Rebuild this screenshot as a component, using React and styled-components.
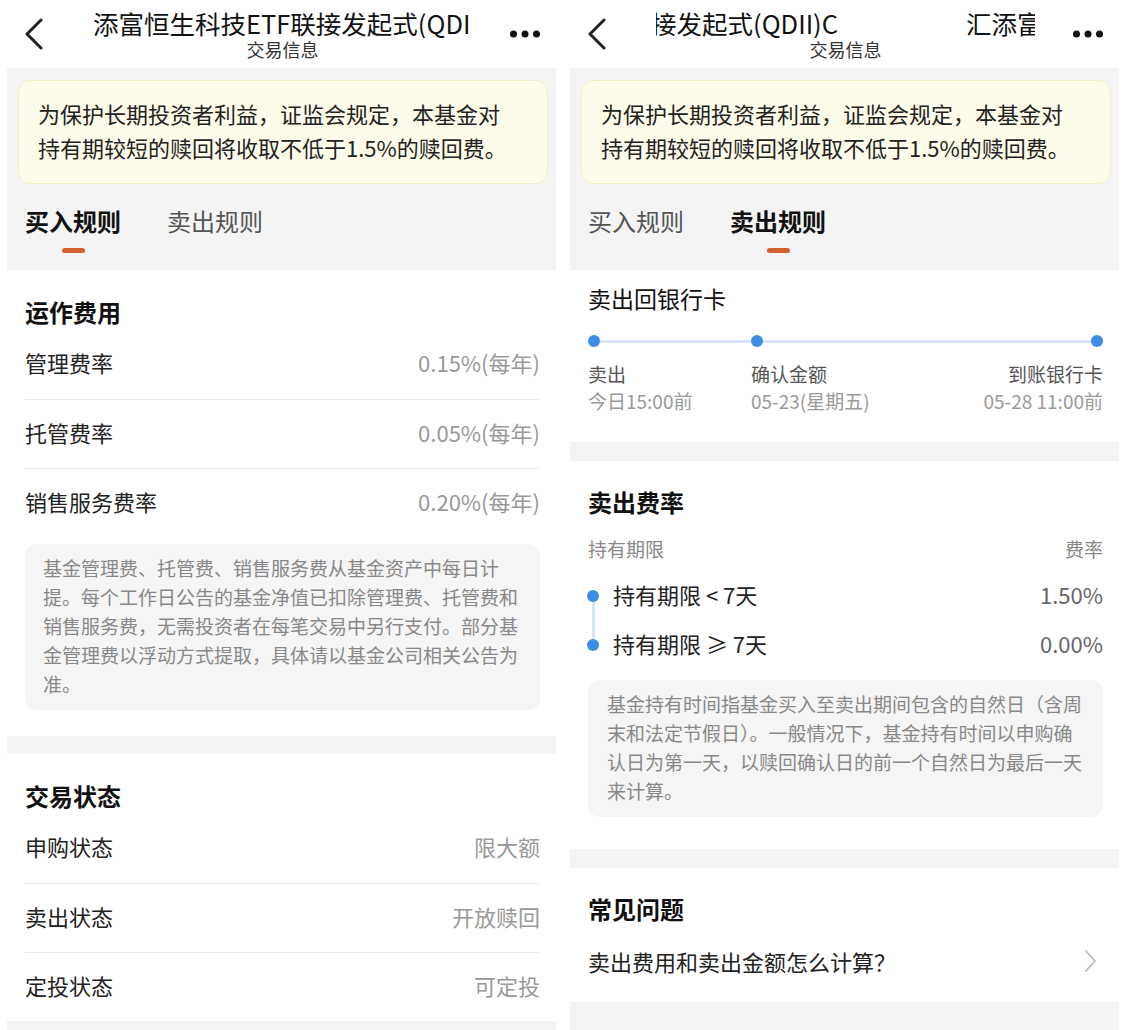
import React from 'react'
import styled, { createGlobalStyle } from 'styled-components'

const FUND_NAME = '汇添富恒生科技ETF联接发起式(QDII)C'

const GlobalStyle = createGlobalStyle`
  html, body {
    margin: 0;
    padding: 0;
    background: #fff;
  }
  body {
    font-family: "Noto Sans CJK SC", "Noto Sans", sans-serif;
    color: #222;
  }
  * {
    box-sizing: border-box;
  }
`

const Page = styled.div`
  display: flex;
  gap: 14px;
  width: 1130px;
  height: 1030px;
  padding-left: 7px;
  overflow: hidden;
  background: #fff;
`

const Screen = styled.div`
  width: 549px;
  flex-shrink: 0;
  display: flex;
  flex-direction: column;
  background: #f4f4f4;
`

/* header */

const Header = styled.header`
  height: 68px;
  flex-shrink: 0;
  background: #fff;
  display: grid;
  grid-template-columns: 86px 379px 1fr;
  align-items: center;
`

const Back = styled.div`
  display: flex;
  align-items: center;
  padding-left: 17px;
`

const TitleBlock = styled.div`
  align-self: start;
  padding-top: 8px;
  display: flex;
  flex-direction: column;
  align-items: center;
  min-width: 0;
`

const TitleClip = styled.div`
  width: 100%;
  height: 30px;
  overflow: hidden;
`

const TitleTrack = styled.div`
  display: flex;
  gap: 128px;
  white-space: nowrap;
  font-size: 25.5px;
  line-height: 30px;
  color: #111;
`

const TitleCopy = styled.span`
  flex-shrink: 0;
  margin-left: ${(p) => (p.$hideFirst ? '-1em' : '0')};
`

const TitleLead = styled.span`
  width: ${(p) => p.$end}px;
  min-width: 0;
  flex-shrink: 0;
  display: flex;
  justify-content: flex-end;
`

const Subtitle = styled.div`
  margin-top: 0;
  font-size: 18px;
  line-height: 22px;
  color: #333;
`

const Menu = styled.div`
  display: flex;
  justify-content: flex-end;
  padding-right: 16px;
`

/* notice + tabs */

const TopArea = styled.div`
  padding: 12px 8px 0 11px;
`

const Notice = styled.div`
  background: #fdfbe9;
  border: 1px solid #f3ecc9;
  border-radius: 12px;
  padding: 15px 30px 19px 19px;
  font-size: 22px;
  line-height: 34px;
  color: #222;
`

const Tabs = styled.div`
  display: flex;
  gap: 46px;
  margin-top: 21px;
  padding: 0 0 17px 7px;
`

const Tab = styled.div`
  display: flex;
  flex-direction: column;
  align-items: center;
  font-size: 24px;
  line-height: 32px;
  font-weight: ${(p) => (p.$active ? 700 : 400)};
  color: ${(p) => (p.$active ? '#111' : '#555')};
`

const TabBar = styled.span`
  width: 23px;
  height: 5px;
  margin-top: 11px;
  border-radius: 3px;
  background: ${(p) => (p.$active ? '#d4602f' : 'transparent')};
`

/* sections */

const Section = styled.section`
  background: #fff;
  margin-top: ${(p) => p.$gap || 0}px;
  padding: ${(p) => p.$top ?? 26}px 16px ${(p) => p.$bottom ?? 0}px 18px;
`

const SectionTitle = styled.h2`
  margin: 0 0 2px;
  font-size: ${(p) => (p.$plain ? 23 : 24)}px;
  line-height: 32px;
  font-weight: ${(p) => (p.$plain ? 400 : 700)};
  color: #111;
`

const InfoRow = styled.div`
  height: 69px;
  padding-bottom: 5px;
  display: flex;
  align-items: center;
  justify-content: space-between;
  & + & {
    border-top: 1px solid #ececec;
  }
`

const Label = styled.span`
  font-size: 22px;
  color: #222;
`

const Value = styled.span`
  font-size: 22px;
  color: ${(p) => p.$color || '#999'};
`

const NoteBox = styled.div`
  margin-top: ${(p) => p.$gap}px;
  background: #f5f5f5;
  border-radius: 12px;
  padding: 9px 18px 12px ${(p) => p.$left || 18}px;
  font-size: 19px;
  line-height: 29px;
  color: #888;
`

/* sell-side timeline */

const Timeline = styled.div`
  display: grid;
  grid-template-columns: 163px 1fr auto;
  margin-top: 21px;
  background: linear-gradient(#d6e6f6, #d6e6f6) no-repeat;
  background-size: calc(100% - 12px) 3px;
  background-position: 6px 4.5px;
`

const Step = styled.div`
  display: flex;
  flex-direction: column;
  align-items: ${(p) => (p.$end ? 'flex-end' : 'flex-start')};
`

const Dot = styled.span`
  width: 12px;
  height: 12px;
  border-radius: 50%;
  background: #3f8be8;
  flex-shrink: 0;
`

const StepLabel = styled.span`
  margin-top: 14px;
  font-size: 19px;
  line-height: 26px;
  color: #555;
`

const StepTime = styled.span`
  margin-top: 1px;
  font-size: 19px;
  line-height: 26px;
  color: #999;
`

/* fee table */

const FeeHead = styled.div`
  margin-top: 18px;
  display: flex;
  justify-content: space-between;
  font-size: 19px;
  line-height: 26px;
  color: #888;
`

const FeeRows = styled.div`
  margin-top: 10px;
  background: linear-gradient(#d6e6f6, #d6e6f6) no-repeat;
  background-size: 3px 48px;
  background-position: 3.5px 23px;
`

const FeeRow = styled.div`
  height: 49px;
  display: flex;
  align-items: center;
  & > ${Dot} {
    margin-left: -1px;
    margin-top: -2px;
  }
`

const FeeText = styled.span`
  display: flex;
  flex: 1;
  justify-content: space-between;
  padding-bottom: 6px;
  margin-left: 14px;
`

const FaqRow = styled.div`
  height: 72px;
  padding-bottom: 5px;
  display: flex;
  align-items: center;
  justify-content: space-between;
  padding-right: 6px;
`

const BackIcon = () => (
  <svg width='20' height='32' viewBox='0 0 20 32'>
    <polyline points='17,2 3,16 17,30' fill='none' stroke='#222' strokeWidth='3' strokeLinecap='round' strokeLinejoin='round' />
  </svg>
)

const MoreIcon = () => (
  <svg width='30' height='8' viewBox='0 0 30 8'>
    <circle cx='3.5' cy='4' r='3.5' fill='#111' />
    <circle cx='15' cy='4' r='3.5' fill='#111' />
    <circle cx='26.5' cy='4' r='3.5' fill='#111' />
  </svg>
)

const ArrowIcon = () => (
  <svg width='13' height='24' viewBox='0 0 13 24'>
    <polyline points='2,2 11,12 2,22' fill='none' stroke='#bbb' strokeWidth='1.8' strokeLinecap='round' strokeLinejoin='round' />
  </svg>
)

const TopBar = ({ scrolled }) => (
  <Header>
    <Back><BackIcon /></Back>
    <TitleBlock>
      <TitleClip>
        <TitleTrack>
          {scrolled ? (
            <>
              <TitleLead $end={182}><TitleCopy>{FUND_NAME}</TitleCopy></TitleLead>
              <TitleCopy>{FUND_NAME}</TitleCopy>
            </>
          ) : (
            <>
              <TitleCopy $hideFirst>{FUND_NAME}</TitleCopy>
              <TitleCopy>{FUND_NAME}</TitleCopy>
            </>
          )}
        </TitleTrack>
      </TitleClip>
      <Subtitle>交易信息</Subtitle>
    </TitleBlock>
    <Menu><MoreIcon /></Menu>
  </Header>
)

const Intro = ({ active }) => (
  <TopArea>
    <Notice>为保护长期投资者利益，证监会规定，本基金对持有期较短的赎回将收取不低于1.5%的赎回费。</Notice>
    <Tabs>
      {['买入规则', '卖出规则'].map((t, i) => (
        <Tab key={t} $active={i === active}>
          {t}
          <TabBar $active={i === active} />
        </Tab>
      ))}
    </Tabs>
  </TopArea>
)

const fees = [
  ['管理费率', '0.15%(每年)'],
  ['托管费率', '0.05%(每年)'],
  ['销售服务费率', '0.20%(每年)']
]

const statuses = [
  ['申购状态', '限大额'],
  ['卖出状态', '开放赎回'],
  ['定投状态', '可定投']
]

const steps = [
  { label: '卖出', time: '今日15:00前' },
  { label: '确认金额', time: '05-23(星期五)' },
  { label: '到账银行卡', time: '05-28 11:00前', end: true }
]

const sellFees = [
  ['持有期限 < 7天', '1.50%'],
  ['持有期限 ≥ 7天', '0.00%']
]

const BuyScreen = () => (
  <Screen>
    <TopBar />
    <Intro active={0} />
    <Section $bottom={26}>
      <SectionTitle>运作费用</SectionTitle>
      {fees.map(([k, v]) => (
        <InfoRow key={k}><Label>{k}</Label><Value>{v}</Value></InfoRow>
      ))}
      <NoteBox $gap={7}>
        基金管理费、托管费、销售服务费从基金资产中每日计提。每个工作日公告的基金净值已扣除管理费、托管费和销售服务费，无需投资者在每笔交易中另行支付。部分基金管理费以浮动方式提取，具体请以基金公司相关公告为准。
      </NoteBox>
    </Section>
    <Section $gap={18}>
      <SectionTitle>交易状态</SectionTitle>
      {statuses.map(([k, v]) => (
        <InfoRow key={k}><Label>{k}</Label><Value>{v}</Value></InfoRow>
      ))}
    </Section>
  </Screen>
)

const SellScreen = () => (
  <Screen>
    <TopBar scrolled />
    <Intro active={1} />
    <Section $top={12} $bottom={28}>
      <SectionTitle $plain>卖出回银行卡</SectionTitle>
      <Timeline>
        {steps.map((s) => (
          <Step key={s.label} $end={s.end}>
            <Dot />
            <StepLabel>{s.label}</StepLabel>
            <StepTime>{s.time}</StepTime>
          </Step>
        ))}
      </Timeline>
    </Section>
    <Section $gap={19} $top={25} $bottom={32}>
      <SectionTitle>卖出费率</SectionTitle>
      <FeeHead><span>持有期限</span><span>费率</span></FeeHead>
      <FeeRows>
        {sellFees.map(([k, v]) => (
          <FeeRow key={k}>
            <Dot />
            <FeeText>
              <Label>{k}</Label>
              <Value $color='#666'>{v}</Value>
            </FeeText>
          </FeeRow>
        ))}
      </FeeRows>
      <NoteBox $gap={10} $left={19}>
        基金持有时间指基金买入至卖出期间包含的自然日（含周末和法定节假日）。一般情况下，基金持有时间以申购确认日为第一天，以赎回确认日的前一个自然日为最后一天来计算。
      </NoteBox>
    </Section>
    <Section $gap={19} $top={25} $bottom={3}>
      <SectionTitle>常见问题</SectionTitle>
      <FaqRow>
        <Label>卖出费用和卖出金额怎么计算？</Label>
        <ArrowIcon />
      </FaqRow>
    </Section>
  </Screen>
)

const App = () => (
  <>
    <GlobalStyle />
    <Page>
      <BuyScreen />
      <SellScreen />
    </Page>
  </>
)

export default App
